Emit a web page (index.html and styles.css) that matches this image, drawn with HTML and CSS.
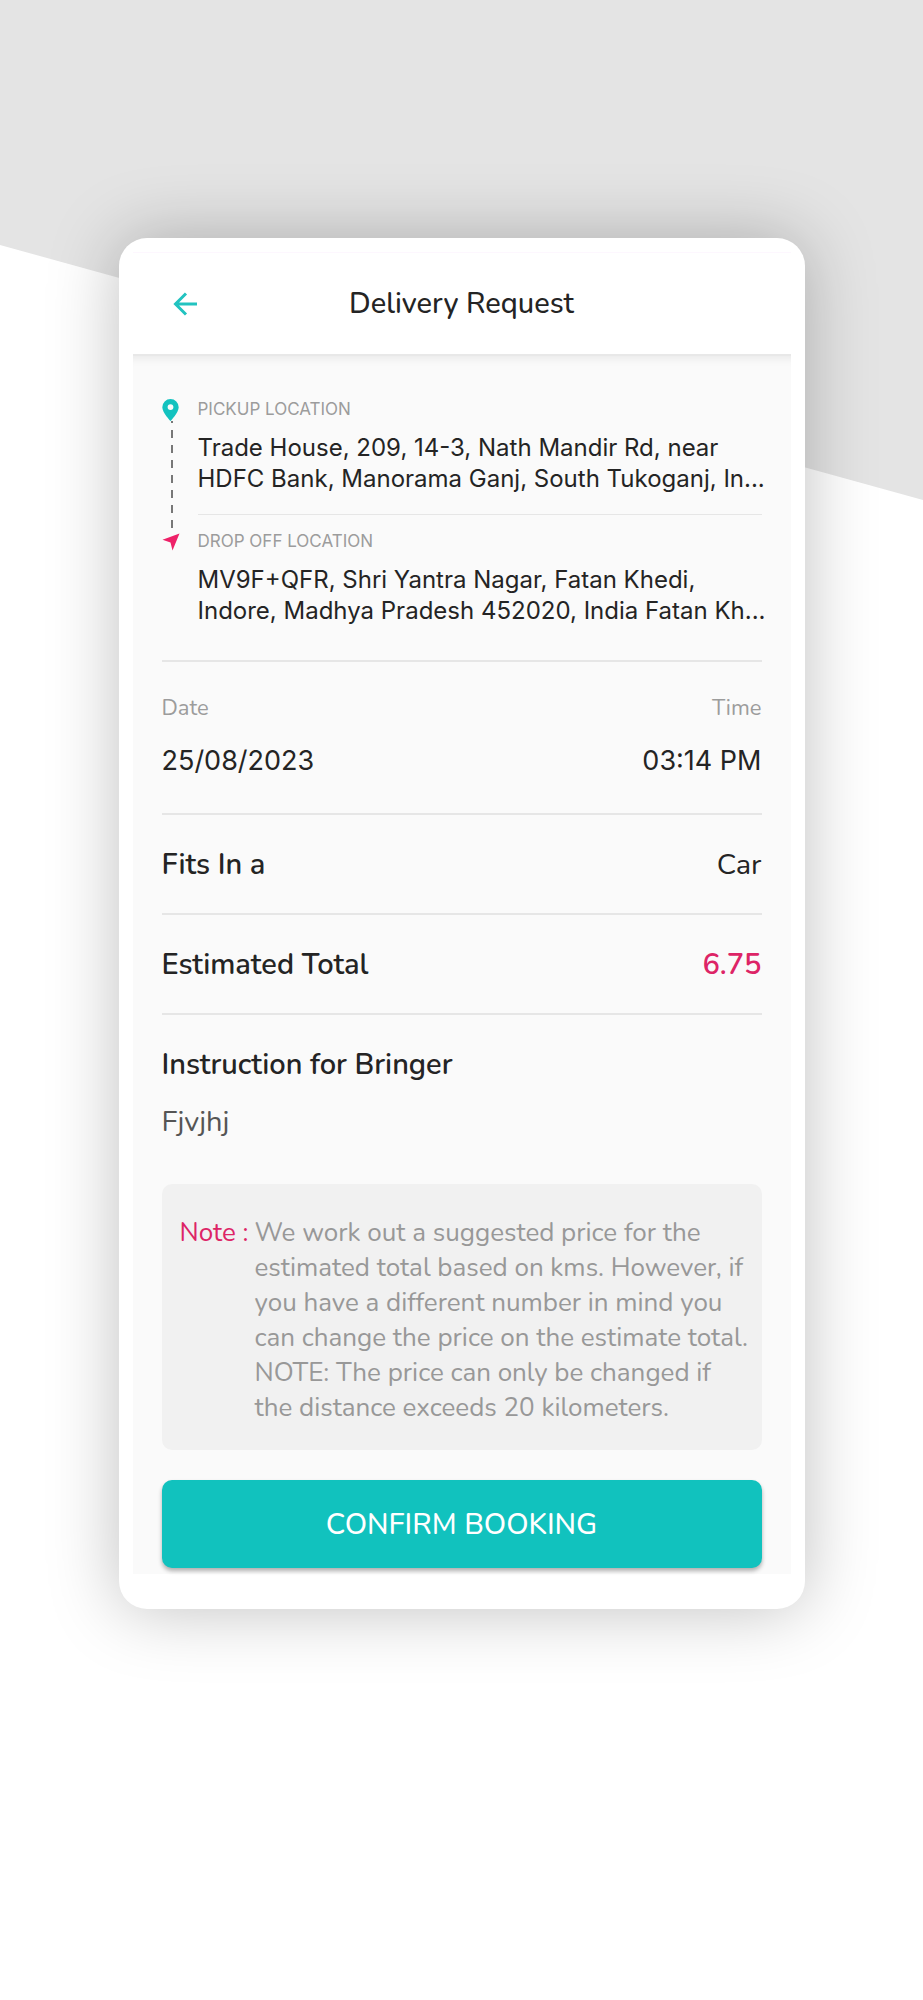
FILE: index.html
```html
<!DOCTYPE html>
<html lang="en">
<head>
    <meta charset="UTF-8">
    <meta name="viewport" content="width=device-width, initial-scale=1.0">
    <title>Delivery Request</title>
    <link rel="stylesheet" href="styles.css">
</head>
<body>
    <div class="page">
        <div class="backdrop"></div>
        <main class="phone">
            <header class="topbar">
                <button type="button" class="back-btn" aria-label="Back">
                    <svg width="24" height="24" viewBox="0 0 24 24" fill="none" stroke="currentColor" stroke-width="3">
                        <path d="M24 12H2.5M13 1.5L2.5 12L13 22.5"/>
                    </svg>
                </button>
                <h1>Delivery Request</h1>
            </header>

            <div class="content">
                <section class="route">
                    <div class="stop">
                        <div class="marker">
                            <svg class="pin" width="17" height="22" viewBox="0 0 17 22">
                                <path fill="currentColor" fill-rule="evenodd" d="M8.500 0A8.200 8.200 0 0 0 0.300 8.200C0.300 13.500 8.500 22 8.500 22S16.700 13.500 16.700 8.200A8.200 8.200 0 0 0 8.500 0ZM8.500 5.200A2.900 2.900 0 1 1 8.500 11A2.900 2.900 0 1 1 8.500 5.200Z"/>
                            </svg>
                            <div class="dashes"></div>
                        </div>
                        <div class="stop-body">
                            <h2 class="stop-label">PICKUP LOCATION</h2>
                            <p class="address">Trade House, 209, 14-3, Nath Mandir Rd, near<br>HDFC Bank, Manorama Ganj, South Tukoganj, In...</p>
                            <hr>
                        </div>
                    </div>
                    <div class="stop">
                        <div class="marker">
                            <svg class="arrow" width="18" height="18" viewBox="0 0 18 18">
                                <path fill="currentColor" d="M17.500 0.500L10.500 17.500L8.500 9.500L0.500 6.800Z"/>
                            </svg>
                        </div>
                        <div class="stop-body">
                            <h2 class="stop-label">DROP OFF LOCATION</h2>
                            <p class="address">MV9F+QFR, Shri Yantra Nagar, Fatan Khedi,<br>Indore, Madhya Pradesh 452020, India Fatan Kh...</p>
                        </div>
                    </div>
                </section>

                <section class="schedule">
                    <div>
                        <h2 class="field-label">Date</h2>
                        <p class="field-value">25/08/2023</p>
                    </div>
                    <div class="right">
                        <h2 class="field-label">Time</h2>
                        <p class="field-value">03:14 PM</p>
                    </div>
                </section>

                <section class="row">
                    <h2>Fits In a</h2>
                    <p>Car</p>
                </section>

                <section class="row">
                    <h2>Estimated Total</h2>
                    <p class="price">6.75</p>
                </section>

                <section class="instruction">
                    <h2>Instruction for Bringer</h2>
                    <p>Fjvjhj</p>
                </section>

                <section class="note">
                    <span class="note-label">Note :</span>
                    <p>We work out a suggested price for the estimated total based on kms. However, if you have a different number in mind you can change the price on the estimate total. NOTE: The price can only be changed if the distance exceeds 20 kilometers.</p>
                </section>

                <button type="button" class="confirm-btn">CONFIRM BOOKING</button>
            </div>
        </main>
    </div>
</body>
</html>
```
FILE: styles.css
```css
* {
    box-sizing: border-box;
    margin: 0;
    padding: 0;
}

body {
    min-height: 100vh;
    background-color: #fff;
    color: #242424;
    font-family: Nunito, "Noto Sans", sans-serif;
    font-size: 29px;
    line-height: 36px;
}

h1, h2 {
    font-size: 29px;
    font-weight: 600;
}

.page {
    display: grid;
}

/* Slanted grey area behind the card */
.backdrop {
    grid-area: 1 / 1;
    height: 500px;
    background-color: #e4e4e4;
    clip-path: polygon(0 0, 100% 0, 100% 100%, 0 49%);
}

.phone {
    grid-area: 1 / 1;
    z-index: 1;
    justify-self: center;
    width: calc(100% - 40px);
    max-width: 686px;
    margin: 238px 0 100px;
    padding: 14px 14px 35px;
    background-color: #fff;
    border-radius: 28px;
    box-shadow: 0 0 70px rgba(0, 0, 0, 0.25);
}

.topbar {
    display: grid;
    grid-template-columns: 1fr auto 1fr;
    align-items: center;
    height: 102px;
    padding: 0 40px;
    border-top: 1px solid #fdf7fe;
}

.topbar h1 {
    font-weight: 500;
    line-height: 34px;
}

.back-btn {
    display: flex;
    justify-self: start;
    background: none;
    border: none;
    color: #22c3c0;
    cursor: pointer;
}

.content {
    padding: 45px 29px 6px;
    background-color: #fafafa;
    box-shadow: inset 0 2px 0 #e8e8e8, inset 0 12px 10px -8px rgba(0, 0, 0, 0.08);
}

/* Pickup and drop off */
.route {
    padding-bottom: 34px;
    border-bottom: 2px solid #e6e6e6;
    font-family: Inter, sans-serif;
}

.stop {
    display: grid;
    grid-template-columns: 18px minmax(0, 1fr);
    column-gap: 18px;
}

.marker {
    display: flex;
    flex-direction: column;
}

.pin {
    color: #13c2bf;
}

.arrow {
    margin-top: 2px;
    color: #ee2168;
}

.dashes {
    flex: 1;
    width: 2px;
    margin-left: 9px;
    background: repeating-linear-gradient(#777 0 2px, transparent 2px 9px, #777 9px 15px);
}

.stop-label {
    color: #9c9c9c;
    font-size: 17px;
    font-weight: 400;
    line-height: 20px;
}

.address {
    margin-top: 13px;
    font-size: 24px;
    line-height: 31px;
    white-space: nowrap;
}

.stop hr {
    margin: 20px 0 16px;
    border: none;
    border-top: 1px solid #e6e6e6;
}

/* Date and time */
.schedule {
    display: flex;
    justify-content: space-between;
    padding: 32px 0 34px;
    border-bottom: 2px solid #e6e6e6;
}

.right {
    text-align: right;
}

.field-label {
    color: #9c9c9c;
    font-size: 22px;
    font-weight: 400;
    line-height: 28px;
}

.field-value {
    margin-top: 21px;
    font-family: Inter, sans-serif;
    font-size: 27px;
}

.row {
    display: flex;
    justify-content: space-between;
    padding: 32px 0 30px;
    border-bottom: 2px solid #e6e6e6;
}

.price {
    color: #dd2466;
    font-weight: 600;
}

.instruction {
    padding: 32px 0 44px;
}

.instruction p {
    margin-top: 21px;
    color: #555;
}

.note {
    display: flex;
    gap: 6px;
    padding: 31px 12px 25px 18px;
    background-color: #f1f1f1;
    border-radius: 10px;
    color: #989898;
    font-size: 26px;
    line-height: 35px;
}

.note-label {
    color: #dd2466;
    white-space: nowrap;
}

.confirm-btn {
    display: block;
    width: 100%;
    height: 88px;
    margin-top: 30px;
    background-color: #11c2be;
    border: none;
    border-radius: 10px;
    box-shadow: 0 3px 4px rgba(0, 0, 0, 0.3);
    color: #fff;
    font-family: inherit;
    font-size: 29px;
    font-weight: 500;
    cursor: pointer;
}
```
